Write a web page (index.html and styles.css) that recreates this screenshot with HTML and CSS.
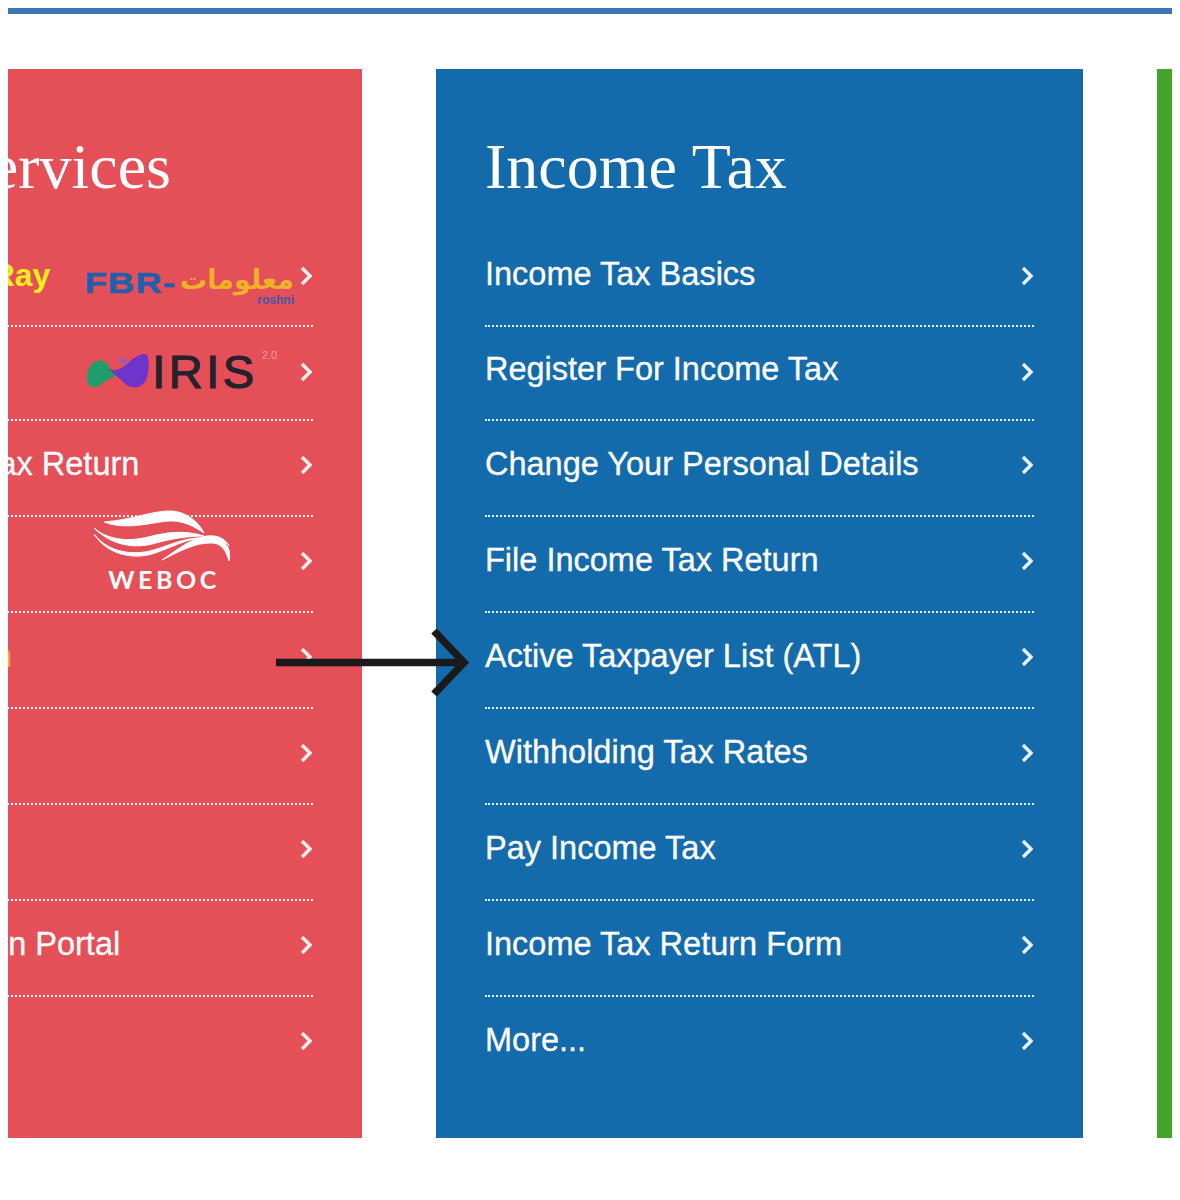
FILE: index.html
```html
<!DOCTYPE html>
<html lang="en">
<head>
    <meta charset="UTF-8">
    <title>Income Tax</title>
    <link rel="stylesheet" href="styles.css">
</head>
<body>
    <div class="top-bar"></div>

    <div class="slider">
        <div class="cards">
            <div class="card card-red">
                <h2 class="card-title">Online Services</h2>
                <ul class="links">
                    <li>
                        <a class="label label-ray">Tax Ray</a>
                        <span class="fbr-logo">
                            <span class="fbr-latin">FBR-</span><span class="fbr-arabic" lang="ar">معلومات</span>
                            <span class="fbr-small">roshni</span>
                        </span>
                        <svg class="chev" viewBox="0 0 12 20"><path d="M2 2l8 8-8 8"/></svg>
                    </li>
                    <li>
                        <span class="iris-logo">
                            <svg class="iris-mark" viewBox="0 0 64 36">
                                <path fill="#1f9e6b" d="M1 22C2 12 10 6 17 8c6 2 7 10 13 14-4 4-10 4-13 8-4 4-11 6-14 2-2-3-3-6-2-10z"/>
                                <path fill="#6d35c9" d="M22 16c8 4 16-2 22-8 6-5 14-9 17-6 3 6 2 20-2 27-5 7-15 7-21 1-5-5-10-10-16-14z"/>
                                <circle fill="#8e5ad8" cx="37" cy="8" r="3"/>
                            </svg>
                            <span class="iris-name">IRIS</span><span class="iris-ver">2.0</span>
                        </span>
                        <svg class="chev" viewBox="0 0 12 20"><path d="M2 2l8 8-8 8"/></svg>
                    </li>
                    <li>
                        <a class="label label-return">Submit Income Tax Return</a>
                        <svg class="chev" viewBox="0 0 12 20"><path d="M2 2l8 8-8 8"/></svg>
                    </li>
                    <li>
                        <span class="weboc-logo">
                            <svg class="weboc-mark" viewBox="0 0 140 54">
                                <path d="M12 12C40 10 62 0 80 1c14 1 26 10 32 22C96 12 84 9 68 12 50 15 30 19 12 12z"/>
                                <path d="M2 18c14 12 34 14 54 9 20-5 36-7 56-1-18 0-34 3-52 8-20 5-42 0-58-16z"/>
                                <path d="M2 24c12 16 34 22 56 17 16-4 30-12 48-13-16 3-30 11-46 16-22 6-46-1-58-20z"/>
                                <path d="M70 50c16-8 34-18 50-17 8 0 14 6 17 18 2-9-1-16-5-18 0 0 5 0 5 3-4-8-12-11-22-10-16 2-30 14-45 24z"/>
                            </svg>
                            <span class="weboc-name">WEBOC</span>
                        </span>
                        <svg class="chev" viewBox="0 0 12 20"><path d="M2 2l8 8-8 8"/></svg>
                    </li>
                    <li>
                        <a class="label label-orange">Tax Asaan</a>
                        <svg class="chev" viewBox="0 0 12 20"><path d="M2 2l8 8-8 8"/></svg>
                    </li>
                    <li>
                        <svg class="chev" viewBox="0 0 12 20"><path d="M2 2l8 8-8 8"/></svg>
                    </li>
                    <li>
                        <svg class="chev" viewBox="0 0 12 20"><path d="M2 2l8 8-8 8"/></svg>
                    </li>
                    <li>
                        <a class="label label-portal">Taxpayer Facilitation Portal</a>
                        <svg class="chev" viewBox="0 0 12 20"><path d="M2 2l8 8-8 8"/></svg>
                    </li>
                    <li>
                        <svg class="chev" viewBox="0 0 12 20"><path d="M2 2l8 8-8 8"/></svg>
                    </li>
                </ul>
            </div>

            <div class="card card-blue">
                <h2 class="card-title">Income Tax</h2>
                <ul class="links">
                    <li><a class="label">Income Tax Basics</a><svg class="chev" viewBox="0 0 12 20"><path d="M2 2l8 8-8 8"/></svg></li>
                    <li><a class="label">Register For Income Tax</a><svg class="chev" viewBox="0 0 12 20"><path d="M2 2l8 8-8 8"/></svg></li>
                    <li><a class="label">Change Your Personal Details</a><svg class="chev" viewBox="0 0 12 20"><path d="M2 2l8 8-8 8"/></svg></li>
                    <li><a class="label">File Income Tax Return</a><svg class="chev" viewBox="0 0 12 20"><path d="M2 2l8 8-8 8"/></svg></li>
                    <li><a class="label">Active Taxpayer List (ATL)</a><svg class="chev" viewBox="0 0 12 20"><path d="M2 2l8 8-8 8"/></svg></li>
                    <li><a class="label">Withholding Tax Rates</a><svg class="chev" viewBox="0 0 12 20"><path d="M2 2l8 8-8 8"/></svg></li>
                    <li><a class="label">Pay Income Tax</a><svg class="chev" viewBox="0 0 12 20"><path d="M2 2l8 8-8 8"/></svg></li>
                    <li><a class="label">Income Tax Return Form</a><svg class="chev" viewBox="0 0 12 20"><path d="M2 2l8 8-8 8"/></svg></li>
                    <li><a class="label">More...</a><svg class="chev" viewBox="0 0 12 20"><path d="M2 2l8 8-8 8"/></svg></li>
                </ul>
            </div>

            <div class="card card-green"></div>
        </div>
    </div>

    <svg class="pointer" viewBox="0 0 200 70">
        <path d="M0 35.5H188M158 4l30 31.5-30 31.5"/>
    </svg>
</body>
</html>
```

FILE: styles.css
```css
html, body {
    height: 100%;
}
body {
    margin: 8px;
    background-color: white;
    font-family: "Liberation Sans", Arial, sans-serif;
    overflow: hidden;
}
.top-bar {
    height: 6px;
    background-color: #3c76b6;
}
.slider {
    margin-top: 55px;
    overflow: hidden;
}
.cards {
    display: flex;
    gap: 74px;
    margin-left: -293px;
}
.card {
    flex: 0 0 647px;
    height: 1069px;
    box-sizing: border-box;
    padding: 0 49px;
    color: white;
}
.card-red {
    background-color: #e54f58;
}
.card-blue {
    background-color: #136bac;
}
.card-green {
    background-color: #43a32a;
}
.card-title {
    margin: 0;
    padding-top: 62px;
    height: 100px;
    font-family: "Liberation Serif", "Times New Roman", serif;
    font-size: 64px;
    line-height: 72px;
    font-weight: normal;
    white-space: nowrap;
}
.links {
    list-style: none;
    margin: 0;
    padding: 0;
}
.links li {
    display: flex;
    align-items: center;
    justify-content: flex-end;
    position: relative;
    height: 96px;
    box-sizing: border-box;
    padding-bottom: 7px;
    border-bottom: 2px dotted rgba(255,255,255,0.9);
}
.links li:first-child {
    padding-bottom: 5px;
}
.links li:first-child .label {
    margin-bottom: 2px;
}
.links li:nth-child(2) {
    height: 94px;
    padding-bottom: 3px;
}
.links li:nth-child(2) .label {
    margin-bottom: 4px;
}
.links li:last-child {
    padding-bottom: 9px;
    border-bottom: none;
}
.label {
    margin-right: auto;
    font-size: 32.5px;
    white-space: nowrap;
    -webkit-text-stroke: 0.3px white;
}
.chev {
    flex: none;
    width: 12px;
    height: 20px;
    margin-right: 1px;
    fill: none;
    stroke: white;
    stroke-opacity: 0.9;
    stroke-width: 3.4;
}

/* the left part of the red card is cut off by the slider, these just line the ends up */
.links li .label-ray {
    margin: 2px auto 0 166px;
    color: #f4ef1c;
    font-weight: bold;
    font-size: 32px;
    -webkit-text-stroke: 0;
}
.label-orange {
    margin-left: 98px;
    color: #f2b01e;
    -webkit-text-stroke: 0;
}
.label-return {
    margin-left: -7px;
}
.label-portal {
    margin-left: -34px;
}
.fbr-logo {
    position: absolute;
    right: 19px;
    top: 30px;
    display: flex;
    align-items: center;
    height: 44px;
    white-space: nowrap;
}
.fbr-latin {
    color: #1f5fae;
    font-size: 29px;
    font-weight: bold;
    letter-spacing: 1px;
    transform: scaleX(1.25);
    transform-origin: right center;
    margin-right: 4px;
    -webkit-text-stroke: 0.6px #1f5fae;
}
.fbr-arabic {
    margin-top: -8px;
    color: #f0b02a;
    font-family: "DejaVu Sans", sans-serif;
    font-size: 27px;
    font-weight: bold;
}
.fbr-small {
    position: absolute;
    right: 0;
    bottom: -2px;
    color: #3f5aa8;
    font-size: 12px;
    font-weight: bold;
}
.iris-logo {
    position: absolute;
    right: 36px;
    top: 14px;
    display: flex;
    align-items: center;
    height: 60px;
}
.iris-mark {
    width: 64px;
    height: 36px;
    margin-right: 2px;
}
.iris-name {
    color: #26222c;
    font-size: 47px;
    letter-spacing: 3.5px;
    margin-right: 4px;
    -webkit-text-stroke: 1.2px #26222c;
}
.iris-ver {
    align-self: flex-start;
    margin-top: 8px;
    color: #eda0a0;
    font-size: 11px;
}
.weboc-logo {
    position: absolute;
    right: 81px;
    top: -7px;
    display: flex;
    flex-direction: column;
    align-items: center;
}
.weboc-mark {
    width: 140px;
    height: 54px;
    fill: white;
    stroke: white;
    stroke-width: 1;
}
.weboc-name {
    margin-top: 2px;
    margin-left: 4px;
    font-family: "Lato", sans-serif;
    font-size: 25px;
    font-weight: bold;
    letter-spacing: 3.5px;
    line-height: 26px;
}
.pointer {
    position: absolute;
    left: 276px;
    top: 627px;
    width: 200px;
    height: 70px;
    fill: none;
    stroke: #1a1a1a;
    stroke-width: 7.5;
}
```
